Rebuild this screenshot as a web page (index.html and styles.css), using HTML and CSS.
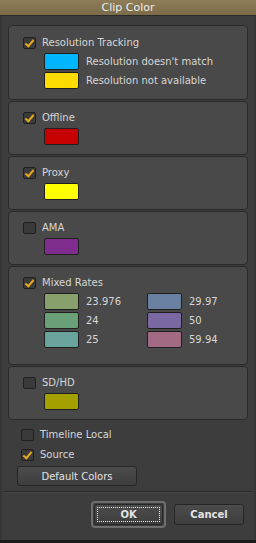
FILE: index.html
```html
<!DOCTYPE html>
<html lang="en">
<head>
  <meta charset="UTF-8">
  <title>Clip Color</title>
  <link rel="stylesheet" href="styles.css">
</head>
<body>
  <div class="window">
    <div class="titlebar">Clip Color</div>

    <div class="content">
      <section class="group">
        <label class="check on"><span class="box"></span>Resolution Tracking</label>
        <div class="swatches">
          <div class="item"><span class="swatch c-cyan"></span>Resolution doesn't match</div>
          <div class="item"><span class="swatch c-gold"></span>Resolution not available</div>
        </div>
      </section>

      <section class="group">
        <label class="check on"><span class="box"></span>Offline</label>
        <div class="swatches"><span class="swatch c-red"></span></div>
      </section>

      <section class="group">
        <label class="check on"><span class="box"></span>Proxy</label>
        <div class="swatches"><span class="swatch c-yellow"></span></div>
      </section>

      <section class="group">
        <label class="check"><span class="box"></span>AMA</label>
        <div class="swatches"><span class="swatch c-purple"></span></div>
      </section>

      <section class="group mixed">
        <label class="check on"><span class="box"></span>Mixed Rates</label>
        <div class="swatches rates">
          <div class="item"><span class="swatch c-r1"></span>23.976</div>
          <div class="item"><span class="swatch c-r2"></span>29.97</div>
          <div class="item"><span class="swatch c-r3"></span>24</div>
          <div class="item"><span class="swatch c-r4"></span>50</div>
          <div class="item"><span class="swatch c-r5"></span>25</div>
          <div class="item"><span class="swatch c-r6"></span>59.94</div>
        </div>
      </section>

      <section class="group">
        <label class="check"><span class="box"></span>SD/HD</label>
        <div class="swatches"><span class="swatch c-olive"></span></div>
      </section>

      <div class="options">
        <label class="check"><span class="box"></span>Timeline Local</label>
        <label class="check on"><span class="box"></span>Source</label>
        <button class="btn wide">Default Colors</button>
      </div>
    </div>

    <div class="footer">
      <div class="focus"><button class="btn ok">OK</button></div>
      <button class="btn cancel">Cancel</button>
    </div>
  </div>
</body>
</html>
```

FILE: styles.css
```css
body {
  margin: 0;
  background: #1c1c1c;
  font-family: "DejaVu Sans", sans-serif;
  font-size: 10px;
  color: #d6d6d6;
}
.window {
  width: 256px;
  height: 540px;
  background: #3d3d3d;
  box-sizing: border-box;
  border-left: 2px solid #363636;
  border-right: 2px solid #363636;
}
.titlebar {
  height: 15px;
  line-height: 15px;
  margin: 0 -2px;
  text-align: center;
  font-size: 11px;
  color: #ececec;
  background: linear-gradient(#8e7d57, #7b6b49);
  border-bottom: 1px solid #2a2a2a;
}
.content {
  padding: 9px 6px 0 6px;
}
.group {
  background: #494949;
  border: 1px solid #2a2a2a;
  border-radius: 4px;
  padding: 10px 14px 9px 14px;
  margin-bottom: 1px;
}
.group:first-child {
  padding-top: 11px;
  padding-bottom: 10px;
}
.group.mixed {
  padding-bottom: 16px;
}
.check {
  display: flex;
  align-items: center;
  height: 12px;
  line-height: 12px;
}
.box {
  width: 11px;
  height: 10px;
  border: 1px solid #1f1f1f;
  border-radius: 2px;
  background: #3a3a3a;
  margin-right: 6px;
  position: relative;
}
.check.on .box::after {
  content: "";
  position: absolute;
  left: 3px;
  top: 0px;
  width: 3px;
  height: 7px;
  border-right: 2px solid #e8a81c;
  border-bottom: 2px solid #e8a81c;
  transform: rotate(40deg);
}
.swatches {
  margin: 4px 0 0 21px;
  display: flex;
  flex-direction: column;
  gap: 2px;
}
.swatches.rates {
  display: grid;
  grid-template-columns: 103px auto;
  gap: 2px 0;
}
.item {
  display: flex;
  align-items: center;
  height: 17px;
}
.swatch {
  width: 33px;
  height: 15px;
  border: 1px solid #1f1f1f;
  border-radius: 2px;
  margin-right: 7px;
  flex: none;
}
.c-cyan { background: #00b6ff; }
.c-gold { background: #ffdc00; }
.c-red { background: #c70000; }
.c-yellow { background: #ffff00; }
.c-purple { background: #7e2c8e; }
.c-r1 { background: #87a06c; }
.c-r2 { background: #6a80a0; }
.c-r3 { background: #6aa078; }
.c-r4 { background: #7a68a2; }
.c-r5 { background: #69a39c; }
.c-r6 { background: #a26a82; }
.c-olive { background: #a3a000; }
.options {
  padding: 8px 0 0 13px;
  display: flex;
  flex-direction: column;
  align-items: flex-start;
  gap: 8px;
}
.btn {
  font-family: "DejaVu Sans", sans-serif;
  font-size: 10px;
  color: #e2e2e2;
  background: linear-gradient(#4c4c4c, #3e3e3e);
  border: 1px solid #262626;
  border-radius: 3px;
  padding: 0;
  height: 20px;
}
.btn.wide {
  width: 120px;
  margin-left: -4px;
  margin-top: -3px;
}
.footer {
  margin: 5px 1px 0 1px;
  border-top: 1px solid #2b2b2b;
  box-shadow: inset 0 1px 0 #474747;
  display: flex;
  justify-content: flex-end;
  align-items: center;
  gap: 8px;
  padding: 9px 9px 0 0;
}
.focus {
  border: 2px solid #6e6e6e;
  border-radius: 4px;
  padding: 1px;
}
.btn.ok {
  width: 69px;
  height: 21px;
  font-weight: bold;
  outline: 1px dotted #e8e8e8;
  outline-offset: -4px;
}
.btn.cancel {
  width: 70px;
  height: 21px;
  font-weight: bold;
}
```
